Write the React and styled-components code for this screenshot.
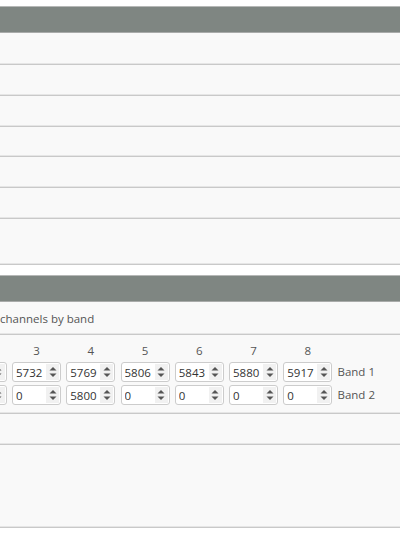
import React from "react";
import styled, { createGlobalStyle } from "styled-components";

const GlobalStyle = createGlobalStyle`
  html, body {
    margin: 0;
    padding: 0;
    background: #ffffff;
    overflow: hidden;
    font-family: "Open Sans", "DejaVu Sans", sans-serif;
  }
`;

const Page = styled.div`
  padding-top: 6px;
  display: flex;
  flex-direction: column;
  gap: 10px;
`;

const Panel = styled.section`
  border-top: 1px solid #b6b8b7;
  background: #f9f9f9;
`;

const Header = styled.div`
  height: 25px;
  background: #7f8682;
  border-bottom: 1px solid #a9abaa;
`;

const Row = styled.div`
  height: ${(p) => p.h}px;
  border-bottom: 1px solid #c9c9c9;
  box-shadow: inset 0 -1px 0 #e6e6e6;
  display: flex;
  align-items: center;
  font-size: 11.5px;
  color: #555555;
`;

const ChannelGrid = styled.div`
  display: grid;
  grid-template-columns: repeat(8, 49px) auto;
  column-gap: 5.25px;
  row-gap: 3px;
  margin-left: -96.5px;
  padding: 8px 0 8px;
  border-bottom: 1px solid #c9c9c9;
  box-shadow: inset 0 -1px 0 #e6e6e6;
  font-size: 11.5px;
  color: #555555;
`;

const ColLabel = styled.div`
  text-align: center;
  line-height: 16px;
  height: 16px;
`;

const BandLabel = styled.div`
  line-height: 20px;
  white-space: nowrap;
`;

const InputBox = styled.div`
  display: flex;
  height: 20px;
  box-sizing: border-box;
  border: 1px solid #cccccc;
  border-radius: 3px;
  background: #ffffff;
  overflow: hidden;
`;

const Value = styled.input`
  flex: 1;
  min-width: 0;
  border: none;
  outline: none;
  padding: 0 0 0 3px;
  font-family: "Open Sans", "DejaVu Sans", sans-serif;
  font-size: 11.5px;
  color: #333333;
  background: transparent;
`;

const Spinner = styled.div`
  width: 13px;
  margin: 1px 1px 1px 0;
  background: #f1f1f1;
  display: flex;
  align-items: center;
  justify-content: center;
`;

const Arrows = () => (
  <svg width="8" height="12" viewBox="0 0 8 12">
    <path d="M0.5 4.5 L4 1 L7.5 4.5 Z" fill="#555" />
    <path d="M0.5 7.5 L4 11 L7.5 7.5 Z" fill="#555" />
  </svg>
);

const NumberField = ({ value }) => (
  <InputBox>
    <Value type="text" defaultValue={value} />
    <Spinner>
      <Arrows />
    </Spinner>
  </InputBox>
);

const band1 = [5658, 5695, 5732, 5769, 5806, 5843, 5880, 5917];
const band2 = [0, 0, 0, 5800, 0, 0, 0, 0];

export default function App() {
  return (
    <>
      <GlobalStyle />
      <Page>
        <Panel>
          <Header />
          <Row h={31} />
          <Row h={30} />
          <Row h={30} />
          <Row h={29} />
          <Row h={30} />
          <Row h={30} />
          <Row h={45} />
        </Panel>
        <Panel>
          <Header />
          <Row h={32}>channels by band</Row>
          <ChannelGrid>
            {band1.map((_, i) => (
              <ColLabel key={`l${i}`}>{i + 1}</ColLabel>
            ))}
            <div />
            {band1.map((v, i) => (
              <NumberField key={`a${i}`} value={v} />
            ))}
            <BandLabel>Band 1</BandLabel>
            {band2.map((v, i) => (
              <NumberField key={`b${i}`} value={v} />
            ))}
            <BandLabel>Band 2</BandLabel>
          </ChannelGrid>
          <Row h={30} />
          <Row h={82} />
        </Panel>
      </Page>
    </>
  );
}
